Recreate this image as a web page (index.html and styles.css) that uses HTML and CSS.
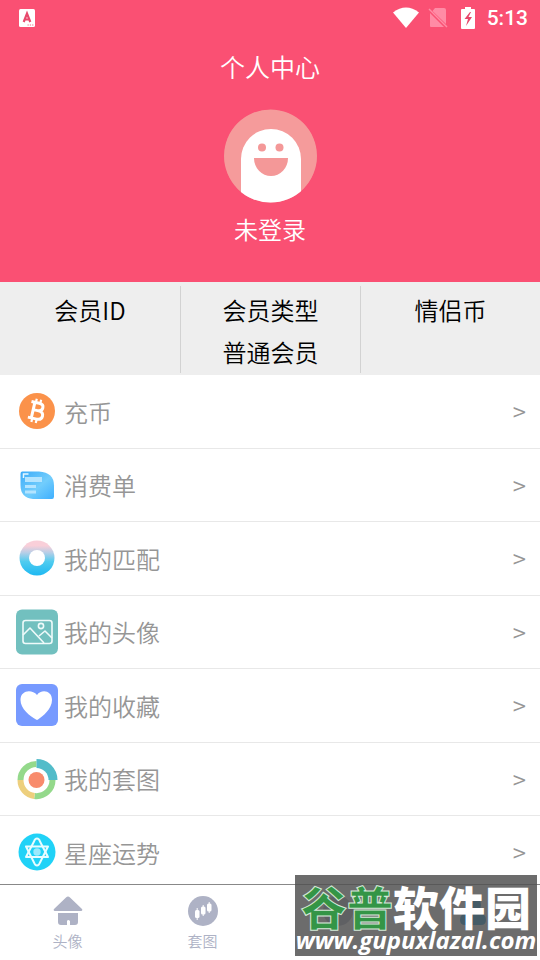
FILE: index.html
```html
<!DOCTYPE html>
<html lang="zh-CN">
<head>
<meta charset="utf-8">
<meta name="viewport" content="width=device-width, initial-scale=1">
<title>个人中心</title>
<link rel="stylesheet" href="styles.css">
</head>
<body>
<div class="app">
  <header class="hero">
    <div class="status">
      <svg class="status-app" width="16" height="18" viewBox="0 0 16 18"><rect width="16" height="18" rx="1.5" fill="#fff"/><path d="M4.700 13 8 4.500l3.300 8.500M6 10.500h4" fill="none" stroke="#e8496c" stroke-width="2.200"/><path d="M8.500 16h1.300m1 0h1.300m1 0h1.300" stroke="#f0708c" stroke-width="1.200"/></svg>
      <svg width="26" height="22" viewBox="0 0 26 22"><path d="M0 5.500Q13-4.500 26 5.500L13 21Z" fill="#fff"/></svg>
      <svg class="status-sim" width="20" height="22" viewBox="0 0 20 22"><path d="M7 1h9q2 0 2 2v14L4.500 4ZM2 6l14 14H3q-1 0-1-1Z" fill="#ff8ba5"/><path d="M1 2l18 18" stroke="#ff8ba5" stroke-width="1.500"/></svg>
      <svg class="status-battery" width="14" height="22" viewBox="0 0 14 22"><path d="M4 0h6v2h3q1 0 1 1v18q0 1-1 1H1q-1 0-1-1V3q0-1 1-1h3Z" fill="#fff"/><path d="M9 5 3.500 12H7l-2 7 6-9H7.500L10 5Z" fill="#e6476b"/></svg>
      <span class="clock">5:13</span>
    </div>
    <h1>个人中心</h1>
    <svg class="avatar" width="94" height="94" viewBox="0 0 94 94"><defs><clipPath id="face"><circle cx="47.500" cy="47" r="46.500"/></clipPath></defs><g clip-path="url(#face)"><circle cx="47.500" cy="47" r="47" fill="#f59b9b"/><path d="M18 94V50a30 30 0 0 1 60 0v44Z" fill="#fff"/></g><circle cx="39" cy="38.500" r="4" fill="#f49898"/><circle cx="56.500" cy="38.500" r="4" fill="#f49898"/><path d="M31 49h34a17 18 0 0 1-34 0Z" fill="#f49898"/></svg>
    <p class="login">未登录</p>
  </header>

  <section class="stats">
    <div><span>会员ID</span></div>
    <div><span>会员类型</span><span>普通会员</span></div>
    <div><span>情侣币</span></div>
  </section>

  <main class="menu">
    <a href="#"><svg viewBox="0 0 42 46"><circle cx="21" cy="23" r="18" fill="#fb924a"/><g transform="rotate(13 21 23)" fill="none" stroke="#fff"><path d="M17 15v16M13.500 15h8q4.500 0 4.500 3.700T21.500 22.500H17M21.500 22.500h1q5 0 5 4.200T22.500 31h-9" stroke-width="3"/><path d="M18 11v4m4.500-4v4M18 31v4m4.500-4v4" stroke-width="2.200"/></g></svg><span>充币</span><b>&gt;</b></a>
    <a href="#"><svg viewBox="0 0 42 46"><defs><linearGradient id="bill" x2="1" y2="1"><stop stop-color="#3cabf9"/><stop offset=".55" stop-color="#72cdfc"/><stop offset="1" stop-color="#3eafff"/></linearGradient></defs><path d="M6 9.500h17q15 1 15 14v11q0 2.500-2 2.500H17Q4.500 36 4.500 23V12q0-2.500 1.500-2.500Z" fill="url(#bill)"/><path d="M9 15h17v5H9ZM9 23h11v3H9ZM9 28.500h11v3H9Z" fill="#b3e4ff"/><path d="M7.500 16v-4h5" fill="none" stroke="#e7f7ff" stroke-width="1.500"/></svg><span>消费单</span><b>&gt;</b></a>
    <a href="#"><svg viewBox="0 0 42 46"><defs><linearGradient id="ring" x2="0" y2="1"><stop offset=".15" stop-color="#f9cfd9"/><stop offset=".35" stop-color="#b6cee7"/><stop offset=".6" stop-color="#50ccef"/><stop offset="1" stop-color="#1eb8f2"/></linearGradient></defs><circle cx="21" cy="23" r="17.500" fill="url(#ring)"/><circle cx="21" cy="23" r="8" fill="#fff"/></svg><span>我的匹配</span><b>&gt;</b></a>
    <a href="#"><svg viewBox="0 0 42 46"><rect y="0.500" width="42" height="45" rx="6" fill="#72c0bf"/><g fill="none" stroke="#effafa" stroke-width="1.600" stroke-linejoin="round"><rect x="7" y="11.500" width="29" height="23" rx="2.500"/><path d="m7 26 7-7 14 15m-5-7 6-5 7 7"/><circle cx="25" cy="17" r="2.600"/></g></svg><span>我的头像</span><b>&gt;</b></a>
    <a href="#"><svg viewBox="0 0 42 46"><rect y="2" width="42" height="42" rx="6" fill="#779aff"/><path d="M21 13c4-6 15-5 15 5 0 9-9 16-14 19.500q-1 .8-2 0C14 34 4.500 27 4.500 18 4.500 8 16 7 21 13Z" fill="#fff"/></svg><span>我的收藏</span><b>&gt;</b></a>
    <a href="#"><svg viewBox="0 0 42 46"><g fill="none"><path d="M4.500 24A16 16 0 0 1 20.500 8" stroke="#94d98b" stroke-width="6"/><path d="M36.500 24a16 16 0 0 1-18 16" stroke="#94d98b" stroke-width="6"/><path d="M4.500 24a16 16 0 0 0 14 16" stroke="#edcf7d" stroke-width="6"/><path d="M20.500 8.500A15.500 15.500 0 0 1 36 24" stroke="#52bcc9" stroke-width="11"/></g><circle cx="20.500" cy="24" r="12" fill="#fff"/><circle cx="20.500" cy="24" r="8" fill="#f88b6c"/></svg><span>我的套图</span><b>&gt;</b></a>
    <a href="#"><svg viewBox="0 0 42 46"><circle cx="21" cy="23" r="18.500" fill="#20d2f7"/><g fill="none" stroke="#e7fcff" stroke-width="2" stroke-linejoin="round"><path d="M21 9.500q2 0 3 3L32 28H10l8-15.500q1-3 3-3Z"/><path d="M21 36.500q-2 0-3-3L10 17.500h22l-8 16q-1 3-3 3Z"/></g><circle cx="21" cy="23" r="3.700" fill="#9beafd"/></svg><span>星座运势</span><b>&gt;</b></a>
  </main>

  <nav class="tabs">
    <a href="#"><svg viewBox="0 0 30 30"><path d="M13 1.500q2-2 4 0L29 13q1 2-1 2H2q-2 0-1-2ZM5 17h20v9q0 3-3 3h-5v-4q-2-2-3 0v4H8q-3 0-3-3Z"/></svg><span>头像</span></a>
    <a href="#"><svg viewBox="0 0 30 30"><circle cx="15" cy="15" r="15"/><g class="cut"><rect x="7" y="14" width="4.500" height="8" rx="1.500"/><rect x="13" y="10.500" width="4.500" height="8" rx="1.500"/><rect x="19" y="7.500" width="4.500" height="8" rx="1.500"/><path d="M9.200 12v12m6-15v11m6-14v11" stroke="#fff" stroke-width="1"/></g></svg><span>套图</span></a>
    <a href="#"><svg viewBox="0 0 30 30"><circle cx="15" cy="15" r="15"/></svg></a>
    <a href="#" class="active"><svg viewBox="0 0 30 30"><circle cx="15" cy="9" r="8"/><path d="M2 24q0-7 8-7h10q8 0 8 7 0 5-5 5H7q-5 0-5-5Z"/></svg></a>
  </nav>

  <div class="watermark">
    <div class="brand"><span>谷普</span>软件园</div>
    <div class="url">www.gupuxlazal.com</div>
  </div>
</div>
</body>
</html>
```
FILE: styles.css
```css
* { box-sizing: border-box; }
body {
  margin: 0;
  background: #fff;
  font-family: "Noto Sans CJK SC", sans-serif;
  font-weight: 350;
}
a { color: inherit; text-decoration: none; }
svg { display: block; flex: none; }

.app {
  position: relative;
  display: flex;
  flex-direction: column;
  height: 100vh;
  overflow: hidden;
}

.hero {
  display: flex;
  flex-direction: column;
  align-items: center;
  flex: none;
  padding-bottom: 35px;
  background: #fa5073;
  color: #fff;
}
.status {
  display: flex;
  align-items: center;
  align-self: stretch;
  height: 36px;
  padding: 0 12px 0 19px;
}
.status-app { margin-right: auto; }
.status-sim { margin-left: 9px; }
.status-battery { margin-left: 13px; }
.clock {
  margin-left: 12px;
  font: 500 21px/24px Roboto, sans-serif;
}
h1 {
  margin: 12px 0 25px;
  font-size: 25px;
  line-height: 36px;
  font-weight: 350;
}
.login {
  margin: 8px 0 0;
  font-size: 24px;
  line-height: 36px;
}

.stats {
  display: grid;
  grid-template-columns: repeat(3, 1fr);
  flex: none;
  height: 93px;
  padding: 4px 0;
  background: #eee;
  color: #000;
  font-size: 24px;
  line-height: 42px;
}
.stats div {
  display: flex;
  flex-direction: column;
  align-items: center;
  padding-top: 3px;
}
.stats div + div { border-left: 1px solid #d2d2d2; }

.menu {
  flex: 1;
  min-height: 0;
  overflow: hidden;
  color: #969696;
  font-size: 24px;
}
.menu a {
  display: flex;
  align-items: center;
  height: 73px;
  padding: 0 14px 1px 16px;
  border-bottom: 1px solid #e8e8e8;
}
.menu a:nth-child(odd) { height: 74px; }
.menu svg { width: 42px; height: 46px; }
.menu span { margin-left: 6px; }
.menu b {
  margin-left: auto;
  font-weight: 350;
  line-height: 28px;
}

.tabs {
  display: grid;
  grid-template-columns: repeat(4, 1fr);
  flex: none;
  height: 76px;
  border-top: 1px solid #888;
  background: #fff;
  color: #aeb2c5;
  font-size: 15px;
  line-height: 22px;
}
.tabs a {
  display: flex;
  flex-direction: column;
  align-items: center;
  gap: 4px;
  padding-top: 11px;
}
.tabs svg { width: 30px; height: 30px; fill: currentColor; }
.tabs .cut { fill: #fff; }
.tabs .active { color: #1296db; }

.watermark {
  position: absolute;
  right: 3px;
  bottom: 4px;
  width: 242px;
  height: 81px;
  background: rgba(80, 80, 80, .84);
  color: #fff;
  text-align: center;
  white-space: nowrap;
}
.brand {
  height: 52px;
  font-size: 46px;
  font-weight: 900;
  line-height: 60px;
}
.brand span {
  color: #349546;
  -webkit-text-stroke: 1px #d5e8d8;
}
.url {
  font: italic 700 24px/26px "Open Sans", sans-serif;
}
```
